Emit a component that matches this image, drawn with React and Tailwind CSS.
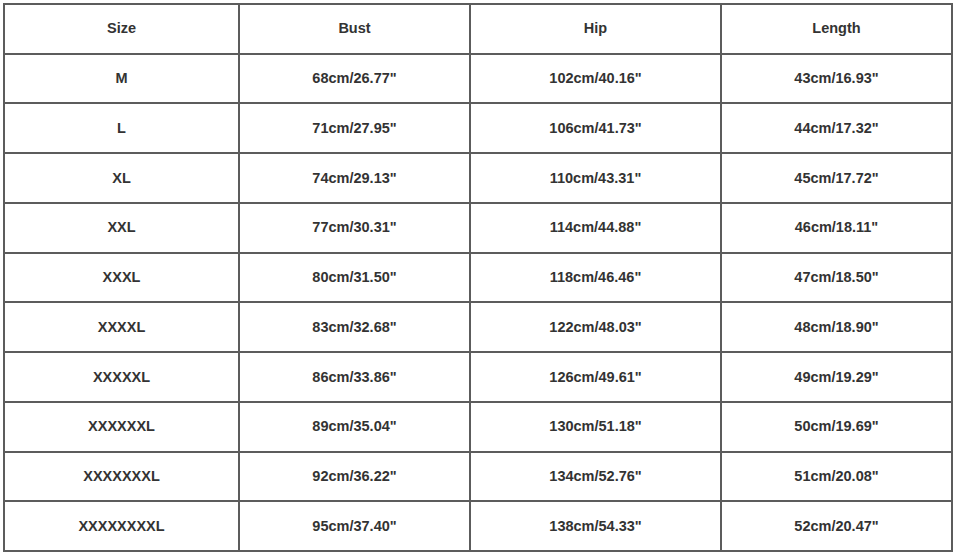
const headers = ["Size", "Bust", "Hip", "Length"];

const rows = [
  ["M", "68cm/26.77\"", "102cm/40.16\"", "43cm/16.93\""],
  ["L", "71cm/27.95\"", "106cm/41.73\"", "44cm/17.32\""],
  ["XL", "74cm/29.13\"", "110cm/43.31\"", "45cm/17.72\""],
  ["XXL", "77cm/30.31\"", "114cm/44.88\"", "46cm/18.11\""],
  ["XXXL", "80cm/31.50\"", "118cm/46.46\"", "47cm/18.50\""],
  ["XXXXL", "83cm/32.68\"", "122cm/48.03\"", "48cm/18.90\""],
  ["XXXXXL", "86cm/33.86\"", "126cm/49.61\"", "49cm/19.29\""],
  ["XXXXXXL", "89cm/35.04\"", "130cm/51.18\"", "50cm/19.69\""],
  ["XXXXXXXL", "92cm/36.22\"", "134cm/52.76\"", "51cm/20.08\""],
  ["XXXXXXXXL", "95cm/37.40\"", "138cm/54.33\"", "52cm/20.47\""],
];

function Cell({ children }) {
  return (
    <div className="flex items-center justify-center pt-[1px] border-r-2 border-b-2 border-[#5c5c5c] text-[14.5px] font-bold text-[#333]">
      {children}
    </div>
  );
}

export default function App() {
  return (
    <div
      className="w-[956px] h-[556px] bg-white pt-[3px] pl-[3px]"
      style={{ fontFamily: '"Liberation Sans", Arial, sans-serif' }}
    >
      <div className="grid w-[950px] h-[549px] grid-cols-[235px_231px_251px_231px] grid-rows-[repeat(11,minmax(0,1fr))] border-t-2 border-l-2 border-[#5c5c5c]">
        {headers.map((h) => (
          <Cell key={h}>{h}</Cell>
        ))}
        {rows.map((row, i) =>
          row.map((val, j) => <Cell key={i + "-" + j}>{val}</Cell>)
        )}
      </div>
    </div>
  );
}
